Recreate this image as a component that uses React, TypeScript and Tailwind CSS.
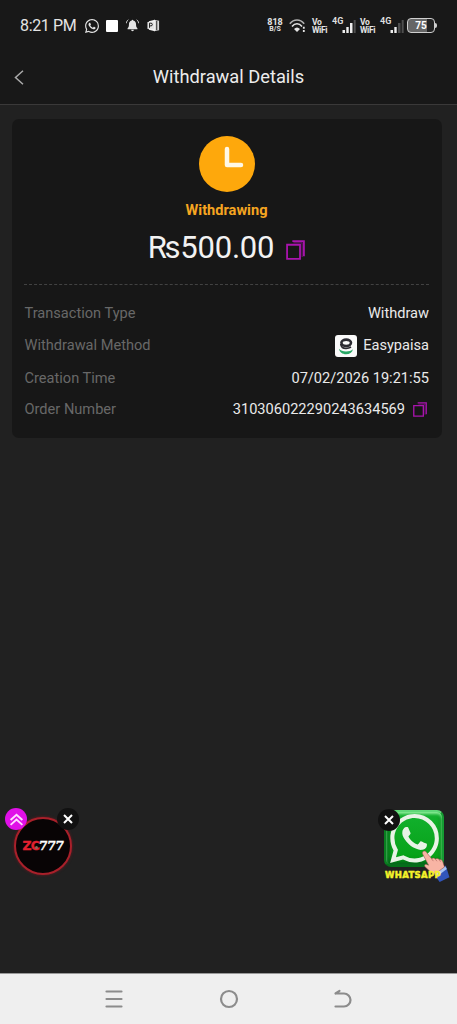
import type { ReactNode } from "react";

const details: { label: string; value: string; logo?: boolean; copy?: boolean; height: string }[] = [
  { label: "Transaction Type", value: "Withdraw", height: "h-8" },
  { label: "Withdrawal Method", value: "Easypaisa", logo: true, height: "h-[33px]" },
  { label: "Creation Time", value: "07/02/2026 19:21:55", height: "h-8" },
  { label: "Order Number", value: "310306022290243634569", copy: true, height: "h-[31px]" },
];

function CopyIcon({ className }: { className: string }) {
  return (
    <svg viewBox="0 0 18 19" fill="none" stroke="currentColor" strokeWidth="1.700" className={className}>
      <path d="M1 4.500h12.300v13.500H1z" />
      <path d="M6 1h11v14.500" strokeWidth="1.700" />
      <path d="M7 2.700h8.300v13.500" strokeWidth="1" opacity="0.6" />
    </svg>
  );
}

function WhatsappGlyph({ className }: { className: string }) {
  return (
    <svg viewBox="0 0 24 24" fill="currentColor" className={className}>
      <path d="M17.472 14.382c-.297-.149-1.758-.867-2.03-.967-.273-.099-.471-.148-.67.15-.197.297-.767.966-.94 1.164-.173.199-.347.223-.644.075-.297-.15-1.255-.463-2.39-1.475-.883-.788-1.48-1.761-1.653-2.059-.173-.297-.018-.458.13-.606.134-.133.298-.347.446-.52.149-.174.198-.298.298-.497.099-.198.05-.371-.025-.52-.075-.149-.669-1.612-.916-2.207-.242-.579-.487-.5-.669-.51-.173-.008-.371-.01-.57-.01-.198 0-.52.074-.792.372-.272.297-1.04 1.016-1.04 2.479 0 1.462 1.065 2.875 1.213 3.074.149.198 2.096 3.2 5.077 4.487.709.306 1.262.489 1.694.625.712.227 1.36.195 1.871.118.571-.085 1.758-.719 2.006-1.413.248-.694.248-1.289.173-1.413-.074-.124-.272-.198-.57-.347m-5.421 7.403h-.004a9.87 9.87 0 01-5.031-1.378l-.361-.214-3.741.982.998-3.648-.235-.374a9.86 9.86 0 01-1.51-5.26c.001-5.45 4.436-9.884 9.888-9.884 2.64 0 5.122 1.03 6.988 2.898a9.825 9.825 0 012.893 6.994c-.003 5.45-4.437 9.884-9.885 9.884m8.413-18.297A11.815 11.815 0 0012.05 0C5.495 0 .16 5.335.157 11.892c0 2.096.547 4.142 1.588 5.945L.057 24l6.305-1.654a11.882 11.882 0 005.683 1.448h.005c6.554 0 11.89-5.335 11.893-11.893a11.821 11.821 0 00-3.48-8.413z" />
    </svg>
  );
}

function EasypaisaLogo() {
  return (
    <span className="flex size-[22px] items-center justify-center rounded-[3px] bg-[#fafafa]">
      <svg viewBox="0 0 22 22" className="size-[22px]" fill="none">
        <ellipse cx="11.200" cy="7.800" rx="4.800" ry="3.200" stroke="#2c2b32" strokeWidth="2.600" />
        <path d="M5.800 9c.2 3.300 2.300 4.600 5.400 4.400 1.900 0 3.500-.5 4.800-1.300" stroke="#2c2b32" strokeWidth="1.800" />
        <path d="M4 13.800c1.600 1.900 4 2.700 7 2.700s5.300-.8 7-2.200c-.8 3.400-3.400 5-6.900 5-3.800 0-6.600-2.100-7.100-5.500z" fill="#28a765" />
      </svg>
    </span>
  );
}

function VoWifi() {
  return (
    <span className="w-4 text-[8.500px] leading-[8px] font-bold tracking-[-0.350px] whitespace-nowrap text-[#e4e4e4]">
      Vo
      <br />
      WiFi
    </span>
  );
}

function Signal({ bars }: { bars: number }) {
  return (
    <span className="relative block h-[15px] w-6">
      <span className="absolute -top-px -left-px text-[9px] leading-[9px] font-bold text-[#dedede]">4G</span>
      <svg viewBox="0 0 24 15" className="h-[15px] w-6" fill="#eee">
        <path d="M9.500 12H12v3H9.500z" />
        <path d="M13.300 9h2.400v6h-2.400z" />
        <path d="M17 5h2.500v10H17z" opacity={bars > 2 ? 1 : 0.25} />
        <path d="M20.700 2h2v13h-2z" opacity="0.25" />
      </svg>
    </span>
  );
}

function StatusBar() {
  return (
    <div className="flex h-[50px] items-center pt-px pr-5 pl-5 text-[#e4e4e4]">
      <span className="w-16 text-[16px] leading-5 tracking-[-0.350px] whitespace-nowrap">8:21 PM</span>
      <div className="flex items-center">
        <WhatsappGlyph className="ml-px size-[14px]" />
        <span className="ml-[7px] size-[12px] rounded-[1px] bg-white" />
        <svg viewBox="0 0 14 14" className="ml-2 size-[13px]" fill="currentColor">
          <path d="M6.200 1.500a.8.800 0 011.600 0C10 2 10.800 3.700 10.800 5.700c0 2.200.4 3.200 1.500 4.300v1H1.700v-1c1.100-1.100 1.500-2.100 1.500-4.300 0-2 .8-3.700 3-4.200z" />
          <path d="M5.500 11.700h3a1.500 1.500 0 01-3 0z" />
          <path d="M2.500.8C1.200 1.700.6 2.900.4 4.600M11.500.8c1.300.9 1.900 2.100 2.100 3.800" fill="none" stroke="currentColor" strokeWidth="1" />
        </svg>
        <svg viewBox="0 0 14 14" className="ml-2 size-[13px]" fill="none">
          <path d="M7.500.8 13 2v10l-5.500 1.200z" fill="#d8d8d8" />
          <path d="M2 2.500 8.500.8v12.400L2 11.500z" fill="#f2f2f2" />
          <rect x="0.500" y="3.200" width="7" height="7.500" fill="#e4e4e4" />
          <path d="M2.700 9.500v-5h1.600a1.400 1.400 0 010 2.900H2.700M10.500 2v10" stroke="#181818" strokeWidth="1" />
        </svg>
      </div>

      <div className="ml-auto flex items-center">
        <span className="w-4 text-center text-[9px] leading-[8px] font-bold whitespace-nowrap">
          818
          <span className="block text-[7px] leading-[7px]">B/S</span>
        </span>
        <svg viewBox="0 0 17 14" className="ml-1.5 h-[14px] w-[17px]" fill="none" stroke="currentColor" strokeWidth="1.600">
          <path d="M.8 4.800C5-.2 11-.2 15.200 4.800" opacity="0.75" />
          <path d="M3 7.500c3-3.600 7-3.600 10 0" />
          <path d="M5 9.900c1.900-2 4.100-2 6 0L8 13z" fill="currentColor" stroke="none" />
          <path d="M14.800 7.800v2M14.800 11v2" strokeWidth="1.800" />
        </svg>
        <span className="ml-1.5 flex">
          <VoWifi />
        </span>
        <span className="ml-[5px]">
          <Signal bars={3} />
        </span>
        <span className="ml-[3px] flex">
          <VoWifi />
        </span>
        <span className="ml-[5px]">
          <Signal bars={2} />
        </span>
        <span className="ml-0.5 flex items-center">
          <span className="flex h-[15px] w-[28px] items-center justify-center rounded-[4px] border-[1.500px] border-[#cfcfcf] bg-linear-to-r from-[#666] from-75% to-[#222] to-75% text-[10px] leading-none font-bold text-white">
            75
          </span>
          <span className="h-[5px] w-[2px] rounded-r-sm bg-[#cfcfcf]" />
        </span>
      </div>
    </div>
  );
}

function Header() {
  return (
    <div className="grid h-[55px] grid-cols-[60px_1fr_60px] items-center border-b border-[#3a3939]">
      <svg viewBox="0 0 10 15" className="ml-[14px] h-[15px] w-[10px]" fill="none" stroke="#aaa" strokeWidth="1.500">
        <path d="M9 .8 1.500 7.500 9 14.200" />
      </svg>
      <h1 className="text-center text-[18.300px] leading-6 whitespace-nowrap text-[#ececec]">Withdrawal Details</h1>
    </div>
  );
}

function CloseBadge({ className }: { className: string }) {
  return (
    <span className={`absolute flex size-[22px] items-center justify-center rounded-full bg-[#111] ${className}`}>
      <svg viewBox="0 0 10 10" className="size-[10px]" stroke="#fff" strokeWidth="2">
        <path d="M1 1l8 8M9 1 1 9" />
      </svg>
    </span>
  );
}

function GameBubble() {
  return (
    <div className="relative mt-2 ml-2 size-[58px]">
      <div className="flex size-[58px] items-center justify-center rounded-full border-2 border-[#a8202a] bg-[#080405] shadow-[0_0_3px_#701820]">
        <span className="flex items-center font-['DejaVu_Serif'] text-[12.500px] leading-none font-bold whitespace-nowrap text-white [-webkit-text-stroke:0.400px_#fff]">
          <span className="font-['DejaVu_Sans'] text-[12.500px] tracking-[-1px] text-[#e2202f] [-webkit-text-stroke:0.300px_#e2202f]">
            ZC
          </span>
          <span className="-skew-x-6 tracking-[-0.500px]">777</span>
        </span>
        <span className="absolute top-[29px] left-[21px] size-[3px] rounded-full bg-[#8c6a5c]" />
      </div>
      <span className="absolute -top-[9px] -left-[9px] flex size-[22px] items-center justify-center rounded-full bg-[#e010e8]">
        <svg viewBox="0 0 14 14" className="size-[15px]" fill="none" stroke="#ffd9ff" strokeWidth="1.800">
          <path d="M1.500 7.500 7 2.500l5.500 5M1.500 12 7 7l5.500 5" />
        </svg>
      </span>
      <CloseBadge className="-top-[9px] left-[43px]" />
    </div>
  );
}

function WhatsappBubble() {
  return (
    <div className="relative h-[74px] w-[68px]">
      <div className="mt-px ml-[2px] flex h-[57px] w-[60px] items-center justify-center rounded-[7px] border-2 border-t-[#60d878] border-r-[#159b32] border-b-[#046f19] border-l-[#087f20] bg-linear-to-b from-[#12b12e] to-[#05a012] shadow-[inset_0_2px_3px_#8df29b,inset_0_-4px_5px_#04631a,inset_4px_0_4px_#04751a]">
        <WhatsappGlyph className="size-[49px] text-[#e8f3e6]" />
      </div>
      <svg viewBox="0 0 28 32" className="absolute top-[41px] left-[39px] h-[33px] w-[29px]">
        <path d="M12 22.500 24 15l3.500 11.500L18 31z" fill="#3155bb" />
        <path d="m13 22 10.500-6 1.500 2.500L15 26z" fill="#a9c4f3" />
        <path
          d="M2.300 1.300c1.200-.7 2.200-.1 3 1l5 6.300c1-1.100 2.500-1 3.500.1 1.400-.9 2.900-.6 3.900.7 1.500-.4 2.800.2 3.400 2l1.600 5.100-9 6.500-5.200-2.500-4.700-4.300c-1.100-1.200.1-2.700 1.500-2.200l2 .7L1.600 4C.9 2.800 1.300 1.900 2.300 1.300z"
          fill="#f8b4a4"
          stroke="#8c4f48"
          strokeWidth="0.500"
        />
        <path d="m10.300 8.600 1.600 2.200M13.800 8.700l1.600 2.200M17.700 9.400l1.200 2" stroke="#b66d64" strokeWidth="0.700" />
      </svg>
      <span className="relative mt-[3px] ml-[3px] block font-['DejaVu_Sans'] text-[8.500px] leading-[10px] font-bold tracking-[0.350px] whitespace-nowrap text-[#f4f22a] [-webkit-text-stroke:0.500px_#f4f22a]">
        WHATSAPP
      </span>
      <CloseBadge className="top-0 -left-1" />
    </div>
  );
}

function NavButton({ children }: { children: ReactNode }) {
  return (
    <svg viewBox="0 0 20 20" className="size-5" fill="none" stroke="#8c8c8c" strokeWidth="2.200" strokeLinecap="round">
      {children}
    </svg>
  );
}

export default function App() {
  return (
    <div className="flex h-[1024px] w-[457px] flex-col overflow-hidden bg-[#212121] font-[Roboto,sans-serif]">
      <div className="bg-[#181818]">
        <StatusBar />
        <Header />
      </div>

      <main className="mt-[14px] mr-[15px] ml-3 h-[319px] rounded-[7px] bg-[#171717] pt-[17px] pr-[13px] pl-3">
        <div className="flex flex-col items-center">
          <svg viewBox="0 0 56 56" className="size-14">
            <circle cx="28" cy="28" r="28" fill="#fea80c" />
            <path d="M28 13v16h14" fill="none" stroke="#fff8e6" strokeWidth="4.500" strokeLinecap="round" strokeLinejoin="round" />
          </svg>
          <p className="mt-2 text-[14.600px] leading-5 font-bold text-[#f5a521]">Withdrawing</p>
          <div className="mt-[7px] flex h-[42px] items-center gap-3">
            <span className="text-[31px] leading-[42px] tracking-[-0.250px] text-[#f2f2f2]">₨500.00</span>
            <CopyIcon className="mt-1 h-[20px] w-[19px] text-[#a914ae]" />
          </div>
        </div>

        <div className="mt-[15px] border-t border-dashed border-[#424242]" />

        <dl className="mt-[12.500px] text-[14.600px]">
          {details.map((row) => (
            <div key={row.label} className={`flex items-center justify-between ${row.height}`}>
              <dt className="pl-[0.500px] text-[#686868]">{row.label}</dt>
              <dd className="flex items-center text-[#eaeaea]">
                {row.logo && (
                  <span className="mr-1.5">
                    <EasypaisaLogo />
                  </span>
                )}
                {row.value}
                {row.copy && <CopyIcon className="mr-0.5 ml-2 h-[15px] w-[14px] text-[#a914ae]" />}
              </dd>
            </div>
          ))}
        </dl>
      </main>

      <div className="mt-auto mb-[90px] flex items-start justify-between pr-[7px] pl-1.5">
        <GameBubble />
        <WhatsappBubble />
      </div>

      <nav className="flex h-[51px] items-center justify-between border-t border-[#999] bg-[#efefef] px-[104px]">
        <NavButton>
          <path d="M2.500 2.500h15M2.500 10h15M2.500 17.500h15" />
        </NavButton>
        <NavButton>
          <circle cx="10" cy="10" r="8" />
        </NavButton>
        <NavButton>
          <path d="M2.500 4.500h8.500a6.500 6.500 0 010 13H2.500M2.500 4.500 6.500 1.800" />
        </NavButton>
      </nav>
    </div>
  );
}
